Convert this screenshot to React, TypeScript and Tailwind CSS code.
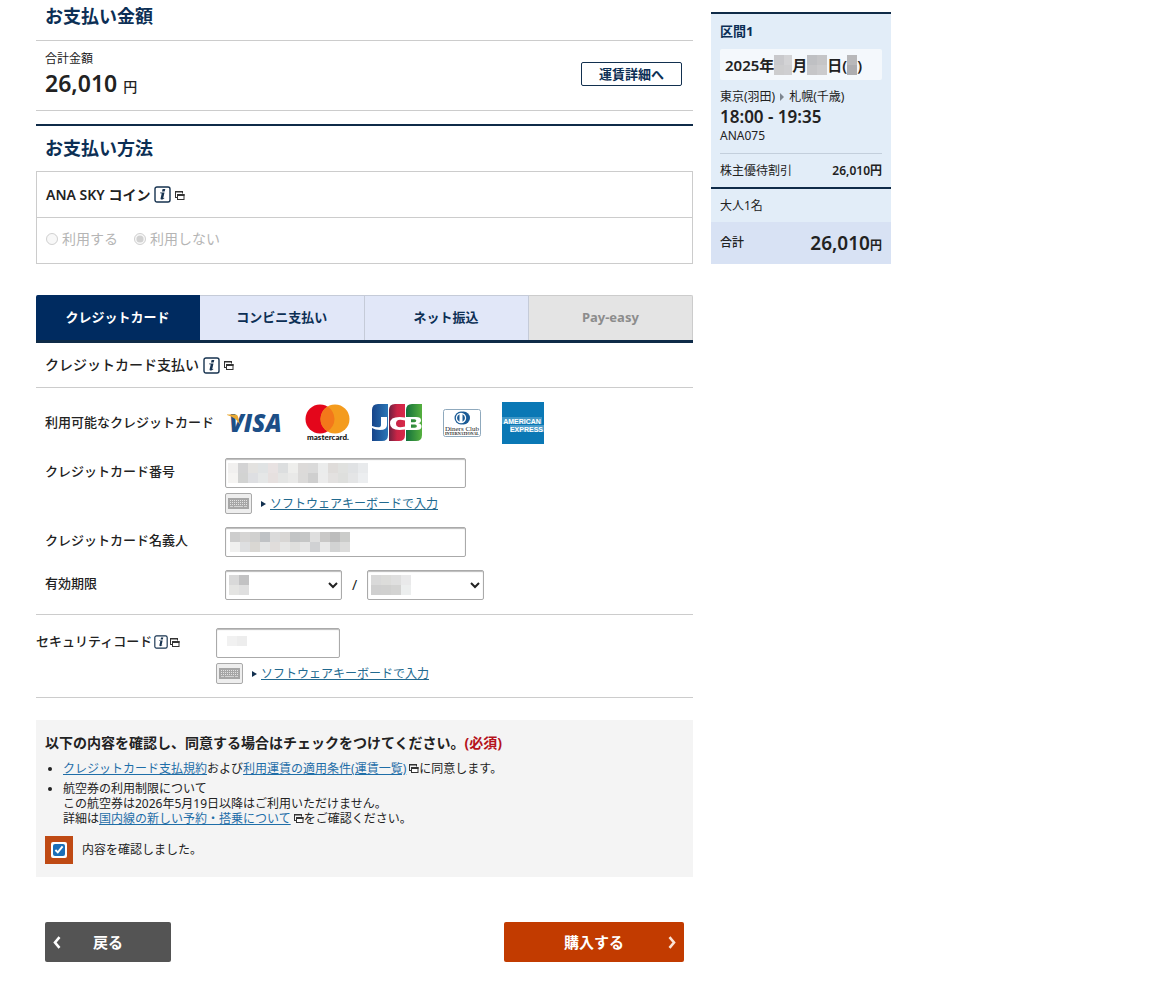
import { useState } from 'react';
import type { ReactNode } from 'react';

const TABS = [
    { id: 'card', label: 'クレジットカード' },
    { id: 'cvs', label: 'コンビニ支払い' },
    { id: 'net', label: 'ネット振込' },
    { id: 'payeasy', label: 'Pay-easy', disabled: true },
];

// Masked values are shown as rows of grey tiles
const CARD_NUMBER_MASK = [
    ['#f1f0ef', '#d3d3d4', '#e3e2e0', '#e0e3e4', '#e8e2e2', '#dcdedf', '#eeeeec', '#dcdad9', '#dadada', '#ebecec', '#dfdcda', '#e0e1df', '#e0e2e4', '#e8eaec'],
    ['#f5f4f2', '#d2d3d2', '#dedfe2', '#e5e7e7', '#e6e0df', '#e4e5e4', '#e9e9e8', '#dbdad9', '#cfcfcf', '#ececec', '#e3e1e0', '#dedfdd', '#e4e5e6', '#eceef0'],
];
const HOLDER_MASK = [
    ['#cdcdcd', '#d6d5d4', '#d0d0cf', '#bfc2c5', '#dadada', '#d8d6d4', '#c2c4c5', '#c5c6c6', '#dedede', '#c9c8c7', '#bdbdbd', '#cbccca'],
    ['#f0f0ef', '#dedfe0', '#d9d7d3', '#e3e4e4', '#e0dddb', '#e6e6e5', '#dfdfdd', '#e5e5e5', '#d0d1d3', '#e8e8e8', '#d2d3d3', '#dcdcdb'],
];
const MONTH_MASK = [
    ['#d9d9d9', '#c2c2c3'],
    ['#e4e4e2', '#dfdfdf'],
];
const YEAR_MASK = [
    ['#d9d9d9', '#dcdcda', '#dfdfdf', '#e9e9ea'],
    ['#cfcfcf', '#d0d0cf', '#d3d3d2', '#eceeee'],
];
const CODE_MASK = [['#f1f1f1', '#ededed']];

function Mosaic({ tiles, className = '' }: { tiles: string[][]; className?: string }) {
    return (
        <svg
            width={tiles[0].length * 10}
            height={tiles.length * 10}
            className={`pointer-events-none ${className}`}
            shapeRendering="crispEdges"
            aria-hidden="true"
        >
            {tiles.map((row, y) =>
                row.map((fill, x) => <rect key={`${x}-${y}`} x={x * 10} y={y * 10} width="10" height="10" fill={fill} />)
            )}
        </svg>
    );
}

function InfoIcon({ small = false }: { small?: boolean }) {
    const size = small ? 14 : 17;
    return (
        <svg width={size} height={size} viewBox="0 0 17 17" className="shrink-0" aria-hidden="true">
            <rect x="1" y="1" width="15" height="15" rx="2" fill="#fff" stroke="#16324f" strokeWidth="1.4" />
            <path d="M8.6 3h2.7l-.6 2.5H8zM6.2 6.600h4.300l-1.200 5.200c-.1.5.3.4.9-.1l.2.5c-1.500 1.600-4.300 2-3.800 0l1-4.300c.1-.5-.2-.6-1.600-.6z" fill="#16324f" />
        </svg>
    );
}

function WindowIcon() {
    return (
        <svg width="10" height="10" viewBox="0 0 10 10" className="inline-block shrink-0 align-baseline" aria-hidden="true">
            <path d="M.5 8V1.500h7V3.500M0 7.500h2" fill="none" stroke="#333" />
            <path d="M0 1h8v1.500H0z" fill="#333" />
            <rect x="2.500" y="4.500" width="6.500" height="5" fill="#fff" stroke="#333" />
            <path d="M2 4h7.500v2H2z" fill="#333" />
        </svg>
    );
}

function KeyboardLink() {
    return (
        <div className="mt-[5px] flex items-center">
            <button
                type="button"
                aria-label="キーボード"
                className="flex h-[21px] w-[27px] items-center justify-center rounded-xs border border-[#aaa] bg-[#eee]"
            >
                <svg width="21" height="11" viewBox="0 0 21 11" aria-hidden="true">
                    <rect width="21" height="11" fill="#a6a6a6" />
                    <path d="M2 2.500h17M2 4.500h17M2 6.500h17" stroke="#e2e2e2" strokeDasharray="1 1" />
                    <path d="M2 8.500h3M6 8.500h9M16 8.500h3" stroke="#d2d2d2" />
                </svg>
            </button>
            <svg width="5" height="6" className="mr-1 ml-[9px]" aria-hidden="true">
                <path d="M0 0l5 3-5 3z" fill="#12304f" />
            </svg>
            <a href="#keyboard" className="text-xs text-[#21698f] underline">ソフトウェアキーボードで入力</a>
        </div>
    );
}

function VisaLogo() {
    return (
        <svg width="59" height="36" viewBox="0 0 59 36" role="img" aria-label="VISA">
            <text x="4" y="27" fill="#1d4f87" fontFamily="Open Sans, sans-serif" fontSize="24" fontWeight="800" fontStyle="italic">VISA</text>
            <path d="M2 9.500h8.500q2 0 2.400 2l2 8Q11 12.500 2 10z" fill="#e9a832" />
        </svg>
    );
}

function MastercardLogo() {
    return (
        <svg width="46" height="38" viewBox="0 0 46 38" role="img" aria-label="mastercard">
            <circle cx="15" cy="15" r="14.500" fill="#e4061b" />
            <circle cx="30" cy="15" r="14.500" fill="#f49b1d" />
            <path d="M22.500 2.600a14.500 14.500 0 0 1 0 24.800a14.500 14.500 0 0 1 0-24.800z" fill="#f3781a" />
            <text x="23" y="36" textAnchor="middle" fill="#111" fontFamily="Lato, sans-serif" fontSize="8" fontWeight="900">mastercard.</text>
        </svg>
    );
}

function JcbLogo() {
    return (
        <svg width="50" height="38" viewBox="0 0 50 38" role="img" aria-label="JCB">
            <defs>
                <linearGradient id="jcb-blue"><stop offset="0" stopColor="#174489" /><stop offset="1" stopColor="#2b76b6" /></linearGradient>
                <linearGradient id="jcb-red"><stop offset="0" stopColor="#6e2140" /><stop offset=".5" stopColor="#c92546" /><stop offset="1" stopColor="#d8284a" /></linearGradient>
                <linearGradient id="jcb-green"><stop offset="0" stopColor="#13703c" /><stop offset="1" stopColor="#55b03e" /></linearGradient>
            </defs>
            <path d="M6 0h10v31q0 6-6 6H0V6q0-6 6-6z" fill="url(#jcb-blue)" />
            <path d="M23 0h10v31q0 6-6 6H17V6q0-6 6-6z" fill="url(#jcb-red)" />
            <path d="M40 0h10v31q0 6-6 6H34V6q0-6 6-6z" fill="url(#jcb-green)" />
            <path d="M9 13h6v8q0 5-7 5q-5 0-8-2v-2q9 3 9-1z" fill="#fff" />
            <path d="M33 13.500v3q-9-2.500-9 3t9 3v3q-15 2-15-6t15-6z" fill="#fff" />
            <path d="M34 13h10q5 0 5 3.200q0 2.600-3 3q3.500.4 3.500 3.300q0 3.500-5 3.500H34zM39 15.200v3h3.500q1.800-.2 1.800-1.500t-1.800-1.500zM39 20.600v3.200h4q1.900-.2 1.900-1.600t-1.900-1.600z" fill="#fff" fillRule="evenodd" />
        </svg>
    );
}

function DinersLogo() {
    return (
        <svg width="38" height="28" viewBox="0 0 38 28" role="img" aria-label="Diners Club">
            <rect x=".5" y=".5" width="37" height="27" rx="2" fill="#fff" stroke="#8fa9bd" />
            <circle cx="20.500" cy="9" r="6.500" fill="#1c5c96" />
            <circle cx="18" cy="9" r="6.500" fill="#1c5c96" />
            <circle cx="18" cy="9" r="5.200" fill="#fff" />
            <path d="M16.500 5.300v7.400a4 4 0 0 1 0-7.400zM19.500 5.300v7.400a4 4 0 0 0 0-7.400z" fill="#1c5c96" />
            <text x="19" y="21.500" textAnchor="middle" fill="#222" fontFamily="Liberation Serif, serif" fontSize="7">Diners Club</text>
            <text x="19" y="26" textAnchor="middle" fill="#222" fontFamily="Liberation Serif, serif" fontSize="4" fontWeight="700">INTERNATIONAL</text>
        </svg>
    );
}

function AmexLogo() {
    return (
        <svg width="42" height="42" viewBox="0 0 42 42" role="img" aria-label="American Express">
            <rect width="42" height="42" fill="#0a78b5" />
            <rect y="15" width="40" height="7" fill="#e4f3fb" opacity=".25" />
            <rect x="8" y="23" width="34" height="7" fill="#e4f3fb" opacity=".3" />
            <text x="20" y="21.500" textAnchor="middle" fill="#fff" fontFamily="Liberation Sans, sans-serif" fontSize="7" fontWeight="700">AMERICAN</text>
            <text x="24.500" y="29.500" textAnchor="middle" fill="#fff" fontFamily="Liberation Sans, sans-serif" fontSize="7" fontWeight="700">EXPRESS</text>
        </svg>
    );
}

function FormRow({ label, htmlFor, children }: { label: ReactNode; htmlFor?: string; children: ReactNode }) {
    return (
        <div className="flex">
            <label htmlFor={htmlFor} className="flex h-7 w-[180px] shrink-0 items-center text-[13px] font-medium">
                {label}
            </label>
            <div>{children}</div>
        </div>
    );
}

const fieldClass = 'block h-[30px] rounded-xs border border-[#aaa] bg-white px-1 text-sm shadow-[inset_0_1px_1px_#bbb]';

export default function App() {
    const [tab, setTab] = useState('card');
    const [agreed, setAgreed] = useState(true);

    return (
        <div className="flex items-start gap-[18px] bg-white px-9 font-['Noto_Sans','Noto_Sans_CJK_JP',sans-serif] text-xs text-[#222]">
            <main className="max-w-[657px] flex-1">
                <h2 className="h-[41px] border-b border-[#ccc] px-[9px] pt-1 text-lg leading-6 font-bold text-[#0c2f55]">お支払い金額</h2>
                <section className="flex items-center justify-between border-b border-[#ccc] px-[9px] pt-2 pb-3">
                    <div>
                        <p className="leading-5">合計金額</p>
                        <p className="text-[23px] leading-[29px] font-semibold">
                            26,010 <span className="text-sm font-medium">円</span>
                        </p>
                    </div>
                    <button type="button" className="mr-[2px] h-6 w-[101px] rounded-xs border border-[#12304f] text-[13px] leading-5 font-bold text-[#0c2f55]">
                        運賃詳細へ
                    </button>
                </section>

                <h2 className="mt-[13px] h-[47px] border-t-2 border-[#0f2b48] px-[9px] pt-[10px] text-lg leading-6 font-bold text-[#0c2f55]">お支払い方法</h2>
                <section className="border border-[#ccc]">
                    <h3 className="flex h-[46px] items-center gap-1 border-b border-[#ccc] px-[9px] text-sm font-semibold">
                        ANA SKY コイン
                        <InfoIcon />
                        <WindowIcon />
                    </h3>
                    <div className="flex h-[45px] items-center gap-4 px-[9px] pb-1 text-sm text-[#b5b5b5]">
                        <label className="flex items-center gap-1">
                            <input type="radio" name="coin" disabled className="size-3" />
                            利用する
                        </label>
                        <label className="flex items-center gap-1">
                            <input type="radio" name="coin" disabled defaultChecked className="size-3" />
                            利用しない
                        </label>
                    </div>
                </section>

                <div role="tablist" className="mt-[31px] grid grid-cols-4 border-b-[3px] border-[#0f2b48]">
                    {TABS.map((t) => (
                        <button
                            key={t.id}
                            type="button"
                            role="tab"
                            aria-selected={tab === t.id}
                            disabled={t.disabled}
                            onClick={() => setTab(t.id)}
                            className={`h-[45px] border-t border-r text-[13px] font-bold first:rounded-tl-xs last:rounded-tr-xs ${
                                t.disabled
                                    ? 'border-[#ccc] bg-[#e4e4e4] text-[#8c8c8c]'
                                    : tab === t.id
                                      ? 'border-[#002b60] bg-[#002b60] text-white'
                                      : 'border-[#c5cbd8] bg-[#e1e7f8] text-[#0c2f55]'
                            }`}
                        >
                            {t.label}
                        </button>
                    ))}
                </div>

                <h3 className="flex h-[45px] items-center gap-1 border-b border-[#ccc] px-[9px] text-sm font-medium">
                    クレジットカード支払い
                    <InfoIcon />
                    <WindowIcon />
                </h3>

                <div className="border-b border-[#ccc] px-[9px] pb-[14px]">
                    <div className="flex h-[70px] items-center">
                        <p className="w-[180px] shrink-0 text-[13px] font-medium">利用可能なクレジットカード</p>
                        <div className="flex items-center gap-[21px]">
                            <VisaLogo />
                            <MastercardLogo />
                            <JcbLogo />
                            <DinersLogo />
                            <AmexLogo />
                        </div>
                    </div>

                    <div className="flex flex-col gap-[13px]">
                        <FormRow label="クレジットカード番号" htmlFor="card-number">
                            <div className="relative">
                                <input id="card-number" type="text" className={`w-[241px] ${fieldClass}`} />
                                <Mosaic tiles={CARD_NUMBER_MASK} className="absolute top-[5px] left-[3px]" />
                            </div>
                            <KeyboardLink />
                        </FormRow>
                        <FormRow label="クレジットカード名義人" htmlFor="card-holder">
                            <div className="relative">
                                <input id="card-holder" type="text" className={`w-[241px] ${fieldClass}`} />
                                <Mosaic tiles={HOLDER_MASK} className="absolute top-[5px] left-[5px]" />
                            </div>
                        </FormRow>
                        <FormRow label="有効期限" htmlFor="exp-month">
                            <div className="flex items-center">
                                <div className="relative">
                                    <select id="exp-month" className={`w-[117px] ${fieldClass}`}>
                                        <option value="" />
                                    </select>
                                    <Mosaic tiles={MONTH_MASK} className="absolute top-[5px] left-1" />
                                </div>
                                <span className="w-[25px] text-center text-sm">/</span>
                                <div className="relative">
                                    <select aria-label="有効期限(年)" className={`w-[117px] ${fieldClass}`}>
                                        <option value="" />
                                    </select>
                                    <Mosaic tiles={YEAR_MASK} className="absolute top-[5px] left-1" />
                                </div>
                            </div>
                        </FormRow>
                    </div>
                </div>

                <div className="border-b border-[#ccc] pt-[13px] pb-[13px]">
                    <FormRow
                        htmlFor="security-code"
                        label={
                            <span className="flex items-center gap-[2px]">
                                セキュリティコード
                                <InfoIcon small />
                                <WindowIcon />
                            </span>
                        }
                    >
                        <div className="relative">
                            <input id="security-code" type="text" className={`w-[124px] ${fieldClass}`} />
                            <Mosaic tiles={CODE_MASK} className="absolute top-2 left-[11px]" />
                        </div>
                        <KeyboardLink />
                    </FormRow>
                </div>

                <section className="mt-[22px] bg-[#f4f4f4] px-[9px] pt-3 pb-[13px]">
                    <h3 className="text-sm leading-[22px] font-bold">
                        以下の内容を確認し、同意する場合はチェックをつけてください。<span className="text-[#b5121b]">(必須)</span>
                    </h3>
                    <ul className="mt-[7px] list-disc space-y-[5px] pl-[18px] leading-[15px]">
                        <li>
                            <a href="#terms" className="text-[#1f6ea8] underline">クレジットカード支払規約</a>および
                            <a href="#fares" className="text-[#1f6ea8] underline">利用運賃の適用条件(運賃一覧)</a> <WindowIcon />に同意します。
                        </li>
                        <li>
                            航空券の利用制限について
                            <br />
                            この航空券は2026年5月19日以降はご利用いただけません。
                            <br />
                            詳細は<a href="#domestic" className="text-[#1f6ea8] underline">国内線の新しい予約・搭乗について</a> <WindowIcon />をご確認ください。
                        </li>
                    </ul>
                    <label className="mt-[10px] flex items-center gap-[9px]">
                        <span className="flex size-7 items-center justify-center bg-[#bf4a14]">
                            <span className="flex size-4 items-center justify-center rounded-xs bg-white">
                                <input
                                    type="checkbox"
                                    checked={agreed}
                                    onChange={(e) => setAgreed(e.target.checked)}
                                    className="size-3 accent-[#1b6fb8]"
                                />
                            </span>
                        </span>
                        内容を確認しました。
                    </label>
                </section>

                <div className="mt-[45px] mb-9 flex justify-between px-[9px] text-[15px] font-bold text-white">
                    <button type="button" className="relative h-10 w-[126px] rounded-xs bg-[#545454]">
                        戻る
                        <svg width="8" height="13" viewBox="0 0 8 13" className="absolute top-[14px] left-2" aria-hidden="true">
                            <path d="M6.500 1.200L2 6.500l4.500 5.300" fill="none" stroke="#fff" strokeWidth="2.600" />
                        </svg>
                    </button>
                    <button type="button" className="relative h-10 w-[180px] rounded-xs bg-[#c23b00]">
                        購入する
                        <svg width="8" height="13" viewBox="0 0 8 13" className="absolute top-[14px] right-2" aria-hidden="true">
                            <path d="M1.500 1.200L6 6.500l-4.500 5.300" fill="none" stroke="#fbe3d6" strokeWidth="2.600" />
                        </svg>
                    </button>
                </div>
            </main>

            <aside className="mt-3 w-[180px] shrink-0 border-t-2 border-[#0f2b48] bg-[#e2edf8]">
                <div className="px-[9px]">
                    <h2 className="pt-[7px] text-[13px] leading-5 font-bold text-[#0c2f55]">区間1</h2>
                    <p className="mt-2 flex h-[31px] items-center rounded-xs bg-[#f4f8fc] px-[5px] text-[15px] font-semibold">
                        <span>2025年</span>
                        <Mosaic tiles={[['#c9c9cc', '#d3d3d5'], ['#cdcdce', '#cfcfd1']]} className="w-[18px]" />
                        <span>月</span>
                        <Mosaic tiles={[['#bfc0c3', '#c5c5c7'], ['#c6c6c8', '#cbcbcd']]} />
                        <span>日(</span>
                        <Mosaic tiles={[['#b8b8ba'], ['#adadb0']]} />
                        <span>)</span>
                    </p>
                    <p className="mt-2 flex items-center leading-[18px]">
                        東京(羽田)
                        <svg width="4" height="8" className="mx-[5px]" aria-hidden="true">
                            <path d="M0 0l4 4-4 4z" fill="#7d8590" />
                        </svg>
                        札幌(千歳)
                    </p>
                    <p className="text-[17px] leading-[21px] font-semibold">18:00 - 19:35</p>
                    <p className="leading-[18px]">ANA075</p>
                    <p className="mt-2 flex h-[34px] items-center justify-between border-t border-[#c3cfdc]">
                        <span>株主優待割引</span>
                        <span className="font-semibold">26,010円</span>
                    </p>
                </div>
                <p className="border-t-2 border-[#0f2b48] px-[9px] leading-[33px]">大人1名</p>
                <p className="flex h-[42px] items-center justify-between bg-[#d8e2f4] px-[9px] font-medium">
                    合計
                    <span className="text-[19px] leading-6 font-semibold">
                        26,010<span className="text-xs">円</span>
                    </span>
                </p>
            </aside>
        </div>
    );
}
